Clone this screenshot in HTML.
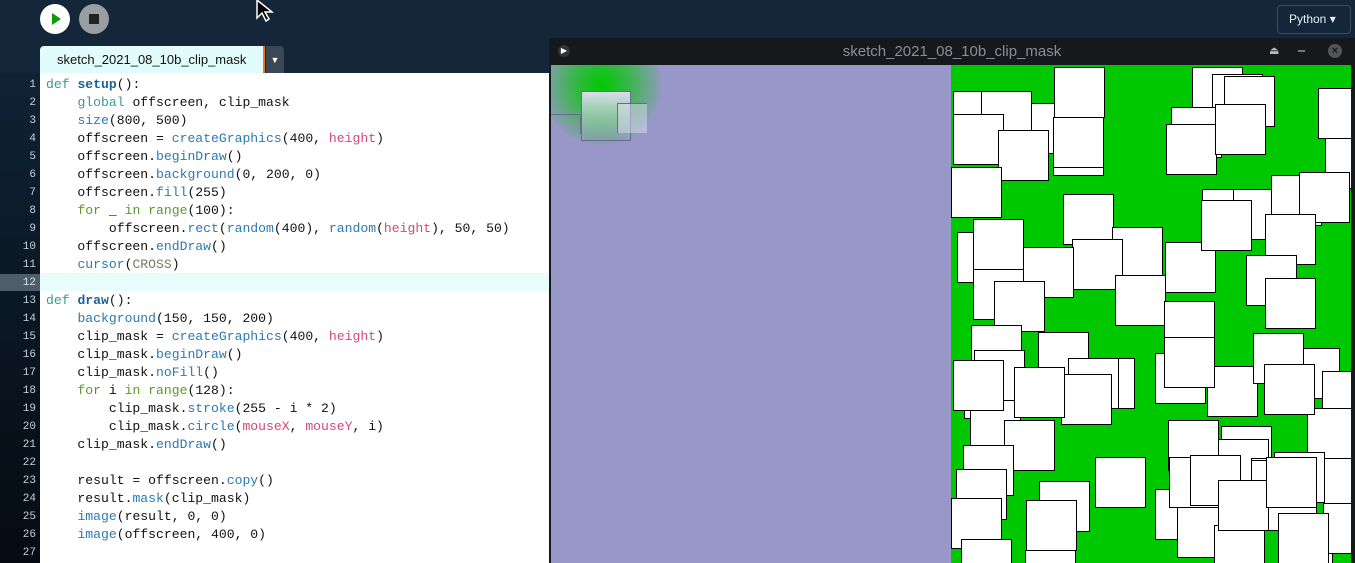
<!DOCTYPE html>
<html><head><meta charset="utf-8"><style>
*{margin:0;padding:0;box-sizing:border-box}
html,body{width:1355px;height:563px;overflow:hidden}
body{background:#13263a;position:relative;font-family:"Liberation Sans",sans-serif}
.btn{position:absolute;top:4px;width:30px;height:30px;border-radius:50%}
#tab{position:absolute;left:40px;top:46px;width:225px;height:27px;background:#e2fbfb;border-right:2px solid #e07a20;font-size:13px;color:#111;padding:6px 0 0 17px;border-radius:4px 0 0 0}
#dd{position:absolute;left:266px;top:46px;width:18px;height:27px;background:#3a4855;color:#fff;font-size:9px;text-align:center;padding-top:9px;border-radius:0 4px 0 0}
#gut{position:absolute;left:0;top:73px;width:40px;height:490px;background:linear-gradient(#0f2234,#050b12)}
#code{position:absolute;left:40px;top:73px;width:510px;height:490px;background:#fff}
.ln{position:absolute;left:0;width:36px;text-align:right;font:11px "Liberation Mono",monospace;color:#c8d0d8}
.cl{position:absolute;left:46px;font:13.1px "Liberation Mono",monospace;color:#111;white-space:pre}
.k{color:#3a9a86}.b{color:#1f6094;font-weight:bold}.f{color:#2a7ab4}.g{color:#5a9a2a}.p{color:#d9457a}.o{color:#6f7f5f}
#win{position:absolute;left:549px;top:38px;width:806px;height:525px;background:#16191c}
#title{position:absolute;left:549px;top:38px;width:806px;height:27px;text-align:center;color:#8a8f94;font-size:15px;padding-top:5px}
#lav{position:absolute;left:551px;top:65px;width:400px;height:498px;background:#9898c8;overflow:hidden}
#grn{position:absolute;left:951px;top:65px;width:400px;height:498px;background:#00c800;overflow:hidden}
#grn div{position:absolute;width:51px;height:51px;background:#fff;border:1.5px solid #000}
</style></head><body>
<div class="btn" style="left:40px;background:#fff"><svg width="30" height="30"><path d="M12 9 L21 15 L12 21Z" fill="#0a9a0a"/></svg></div>
<div class="btn" style="left:79px;background:#9a9ea2"><div style="position:absolute;left:10px;top:10px;width:10px;height:10px;background:#222"></div></div>
<svg style="position:absolute;left:255px;top:0" width="26" height="24"><path d="M2 0 L2 18 L7 13 L11 21 L14 19 L10 12 L17 12Z" fill="#000" stroke="#fff" stroke-width="1.5"/></svg>
<div style="position:absolute;left:1277px;top:5px;width:74px;height:29px;border:1px solid #3a4c5e;border-radius:4px;color:#e8eef2;font-size:12px;padding:6px 0 0 11px">Python ▾</div>
<div id="tab">sketch_2021_08_10b_clip_mask</div><div id="dd">▼</div>
<div id="gut"></div><div id="code"></div>
<div style="position:absolute;left:0;top:274px;width:40px;height:17px;background:#4e5e68"></div>
<div style="position:absolute;left:40px;top:273px;width:509px;height:18px;background:#e8fcfc"></div>
<div class="ln" style="top:79px">1</div><div class="cl" style="top:77px"><span class="k">def</span> <span class="b">setup</span>():</div>
<div class="ln" style="top:97px">2</div><div class="cl" style="top:95px">    <span class="k">global</span> offscreen, clip_mask</div>
<div class="ln" style="top:115px">3</div><div class="cl" style="top:113px">    <span class="f">size</span>(800, 500)</div>
<div class="ln" style="top:133px">4</div><div class="cl" style="top:131px">    offscreen = <span class="f">createGraphics</span>(400, <span class="p">height</span>)</div>
<div class="ln" style="top:151px">5</div><div class="cl" style="top:149px">    offscreen.<span class="f">beginDraw</span>()</div>
<div class="ln" style="top:169px">6</div><div class="cl" style="top:167px">    offscreen.<span class="f">background</span>(0, 200, 0)</div>
<div class="ln" style="top:187px">7</div><div class="cl" style="top:185px">    offscreen.<span class="f">fill</span>(255)</div>
<div class="ln" style="top:205px">8</div><div class="cl" style="top:203px">    <span class="g">for</span> _ <span class="g">in</span> <span class="g">range</span>(100):</div>
<div class="ln" style="top:223px">9</div><div class="cl" style="top:221px">        offscreen.<span class="f">rect</span>(<span class="f">random</span>(400), <span class="f">random</span>(<span class="p">height</span>), 50, 50)</div>
<div class="ln" style="top:241px">10</div><div class="cl" style="top:239px">    offscreen.<span class="f">endDraw</span>()</div>
<div class="ln" style="top:259px">11</div><div class="cl" style="top:257px">    <span class="f">cursor</span>(<span class="o">CROSS</span>)</div>
<div class="ln" style="top:277px;color:#dde">12</div>
<div class="ln" style="top:295px">13</div><div class="cl" style="top:293px"><span class="k">def</span> <span class="b">draw</span>():</div>
<div class="ln" style="top:313px">14</div><div class="cl" style="top:311px">    <span class="f">background</span>(150, 150, 200)</div>
<div class="ln" style="top:331px">15</div><div class="cl" style="top:329px">    clip_mask = <span class="f">createGraphics</span>(400, <span class="p">height</span>)</div>
<div class="ln" style="top:349px">16</div><div class="cl" style="top:347px">    clip_mask.<span class="f">beginDraw</span>()</div>
<div class="ln" style="top:367px">17</div><div class="cl" style="top:365px">    clip_mask.<span class="f">noFill</span>()</div>
<div class="ln" style="top:385px">18</div><div class="cl" style="top:383px">    <span class="g">for</span> i <span class="g">in</span> <span class="g">range</span>(128):</div>
<div class="ln" style="top:403px">19</div><div class="cl" style="top:401px">        clip_mask.<span class="f">stroke</span>(255 - i * 2)</div>
<div class="ln" style="top:421px">20</div><div class="cl" style="top:419px">        clip_mask.<span class="f">circle</span>(<span class="p">mouseX</span>, <span class="p">mouseY</span>, i)</div>
<div class="ln" style="top:439px">21</div><div class="cl" style="top:437px">    clip_mask.<span class="f">endDraw</span>()</div>
<div class="ln" style="top:457px">22</div>
<div class="ln" style="top:475px">23</div><div class="cl" style="top:473px">    result = offscreen.<span class="f">copy</span>()</div>
<div class="ln" style="top:493px">24</div><div class="cl" style="top:491px">    result.<span class="f">mask</span>(clip_mask)</div>
<div class="ln" style="top:511px">25</div><div class="cl" style="top:509px">    <span class="f">image</span>(result, 0, 0)</div>
<div class="ln" style="top:529px">26</div><div class="cl" style="top:527px">    <span class="f">image</span>(offscreen, 400, 0)</div>
<div class="ln" style="top:547px">27</div>
<div id="win"></div>
<div id="title">sketch_2021_08_10b_clip_mask</div>
<div style="position:absolute;left:558px;top:45px;width:12px;height:12px;border-radius:50%;background:#333;color:#fff;font-size:8px;text-align:center;line-height:12px">▶</div>
<div style="position:absolute;left:1269px;top:44px;color:#bbb;font-size:11px">⏏</div>
<div style="position:absolute;left:1298px;top:50px;width:7px;height:2px;background:#777"></div>
<div style="position:absolute;left:1328px;top:44px;width:14px;height:14px;border-radius:50%;background:#555;color:#16191c;font-size:11px;text-align:center;line-height:14px;font-weight:bold">×</div>
<div id="lav">
<div style="position:absolute;left:-10px;top:-40px;width:120px;height:120px;border-radius:50%;background:radial-gradient(circle,#00c800 0%,rgba(0,200,0,.6) 35%,rgba(152,152,200,0) 75%)"></div>
<div style="position:absolute;left:30px;top:26px;width:50px;height:50px;border:1px solid #6a6a90;background:linear-gradient(#dcdcf0,rgba(200,200,230,0))"></div>
<div style="position:absolute;left:66px;top:38px;width:30px;height:30px;border:1px solid #6a6a90;border-right:none;border-bottom:none;background:rgba(220,220,240,.5)"></div>
<div style="position:absolute;left:0;top:49px;width:30px;height:20px;border-top:1px solid #6a6a90;border-right:1px solid #6a6a90"></div>
</div>
<div id="grn">
<div style="left:2px;top:26px"></div><div style="left:67px;top:38px"></div><div style="left:102px;top:60px"></div><div style="left:102px;top:52px"></div><div style="left:103px;top:2px"></div><div style="left:30px;top:26px"></div><div style="left:2px;top:49px"></div><div style="left:47px;top:65px"></div><div style="left:0px;top:102px"></div>
<div style="left:241px;top:2px"></div><div style="left:261px;top:9px"></div><div style="left:273px;top:11px"></div><div style="left:220px;top:42px"></div><div style="left:215px;top:59px"></div><div style="left:264px;top:39px"></div><div style="left:374px;top:73px"></div><div style="left:367px;top:23px"></div>
<div style="left:112px;top:129px"></div><div style="left:161px;top:162px"></div><div style="left:121px;top:174px"></div><div style="left:214px;top:177px"></div><div style="left:251px;top:124px"></div><div style="left:282px;top:124px"></div><div style="left:320px;top:110px"></div><div style="left:348px;top:107px"></div><div style="left:250px;top:135px"></div><div style="left:314px;top:149px"></div><div style="left:295px;top:190px"></div><div style="left:314px;top:213px"></div>
<div style="left:6px;top:167px"></div><div style="left:72px;top:182px"></div><div style="left:22px;top:154px"></div><div style="left:22px;top:204px"></div><div style="left:164px;top:210px"></div><div style="left:43px;top:216px"></div><div style="left:213px;top:236px"></div>
<div style="left:20px;top:260px"></div><div style="left:87px;top:267px"></div><div style="left:133px;top:293px"></div><div style="left:13px;top:303px"></div><div style="left:19px;top:335px"></div><div style="left:23px;top:285px"></div><div style="left:2px;top:295px"></div><div style="left:117px;top:293px"></div><div style="left:110px;top:309px"></div><div style="left:63px;top:302px"></div><div style="left:53px;top:355px"></div><div style="left:12px;top:380px"></div><div style="left:5px;top:404px"></div><div style="left:0px;top:433px"></div><div style="left:88px;top:416px"></div><div style="left:75px;top:435px"></div><div style="left:74px;top:485px"></div><div style="left:10px;top:474px"></div><div style="left:144px;top:392px"></div>
<div style="left:204px;top:288px"></div><div style="left:213px;top:236px"></div><div style="left:256px;top:301px"></div><div style="left:217px;top:355px"></div><div style="left:270px;top:361px"></div><div style="left:239px;top:390px"></div><div style="left:267px;top:374px"></div><div style="left:300px;top:393px"></div><div style="left:300px;top:395px"></div><div style="left:213px;top:272px"></div><div style="left:338px;top:283px"></div><div style="left:371px;top:306px"></div><div style="left:356px;top:343px"></div><div style="left:373px;top:393px"></div><div style="left:302px;top:268px"></div><div style="left:313px;top:299px"></div><div style="left:323px;top:387px"></div><div style="left:315px;top:415px"></div><div style="left:204px;top:424px"></div><div style="left:226px;top:442px"></div><div style="left:263px;top:460px"></div><div style="left:331px;top:477px"></div><div style="left:372px;top:438px"></div><div style="left:327px;top:448px"></div><div style="left:218px;top:392px"></div><div style="left:239px;top:390px"></div><div style="left:267px;top:415px"></div><div style="left:315px;top:392px"></div>
</div>
</body></html>
